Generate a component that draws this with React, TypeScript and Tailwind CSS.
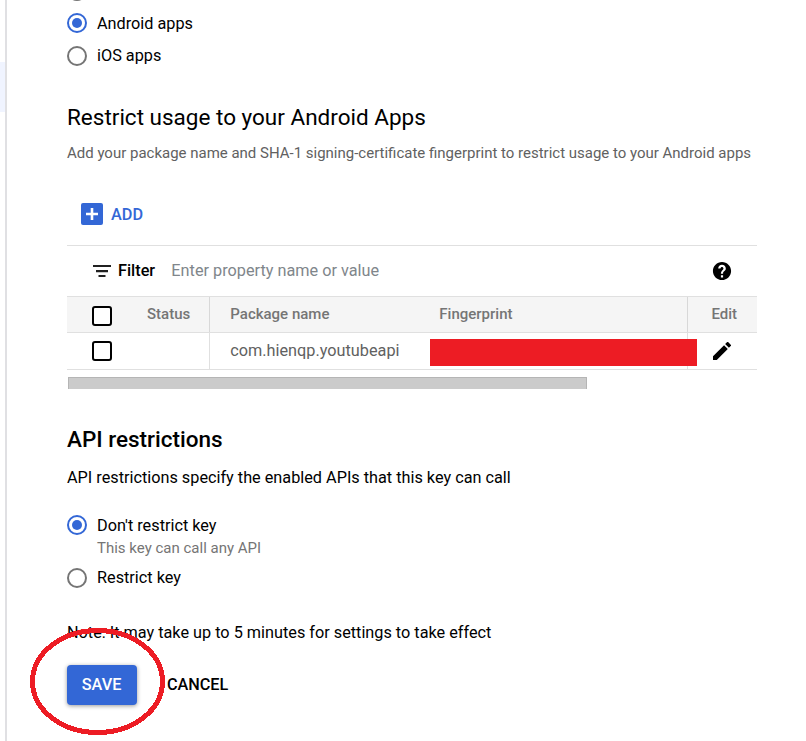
import type { ReactNode } from "react";

function Radio({ checked = false }: { checked?: boolean }) {
  return (
    <span
      className={`flex size-5 shrink-0 items-center justify-center rounded-full border-2 ${
        checked ? "border-[#3367d6]" : "border-[#757575]"
      }`}
    >
      {checked && <span className="size-2.5 rounded-full bg-[#3367d6]" />}
    </span>
  );
}

function RadioRow({ checked, children }: { checked?: boolean; children?: ReactNode }) {
  return (
    <label className="flex h-5 items-center gap-2.5">
      <Radio checked={checked} />
      <span className={checked ? "pt-0.5" : ""}>{children}</span>
    </label>
  );
}

function Checkbox() {
  return <span className="block size-5 shrink-0 rounded-[3px] border-2 border-black bg-white" />;
}

export default function App() {
  return (
    <div className="relative flex h-[741px] w-[806px] overflow-hidden bg-white font-['Roboto',sans-serif] text-[16.25px] leading-5 whitespace-nowrap text-black">
      <aside className="w-[7px] shrink-0 border-r-2 border-[#e0e0e3] pt-[62px]">
        <div className="h-[50px] bg-[#f0f4ff]" />
      </aside>

      <main className="w-[750px] pl-[60px]">
        <div className="-mt-[19px] flex flex-col">
          <RadioRow />
          <div className="h-3" />
          <RadioRow checked>Android apps</RadioRow>
          <div className="h-[13px]" />
          <RadioRow>iOS apps</RadioRow>
        </div>

        <h2 className="mt-9 text-[22.5px] leading-[30px]">Restrict usage to your Android Apps</h2>
        <p className="mt-[11px] text-[14.99px] text-[#616161]">
          Add your package name and SHA-1 signing-certificate fingerprint to restrict usage to your Android apps
        </p>

        <button className="mt-10 ml-[14px] flex h-[22px] items-center gap-2 font-medium text-[#3367d6]">
          <svg width="22" height="22" viewBox="0 0 22 22">
            <rect width="22" height="22" rx="2" fill="#3367d6" />
            <path d="M11 5v12M5 11h12" stroke="white" strokeWidth="2.6" />
          </svg>
          <span className="pt-0.5">ADD</span>
        </button>

        <section className="mt-5 w-[690px] border-t border-[#e0e0e0]">
          <div className="flex h-[50px] items-center">
            <svg className="ml-[26px]" width="18" height="12" viewBox="0 0 18 12" fill="#212121">
              <path d="M0 0h18v2H0zM3 5h12v2.2H3zM5.5 10h7v2h-7z" />
            </svg>
            <span className="ml-[7px] font-medium">Filter</span>
            <span className="ml-[16.25px] text-[#80868b]">Enter property name or value</span>
            <svg className="mr-[25px] ml-auto" width="20" height="20" viewBox="1 1 22 22">
              <path d="M12 2C6.48 2 2 6.48 2 12s4.48 10 10 10 10-4.48 10-10S17.52 2 12 2zm1.2 17.2h-2.4v-2.4h2.4v2.4zm2.07-7.75-.9.92C13.45 12.9 13.2 13.5 13.2 15h-2.4v-.5c0-1.1.45-2.1 1.17-2.83l1.24-1.26c.27-.26.39-.76.39-1.21 0-.9-.8-1.6-1.6-1.6s-1.7.7-1.7 1.6H7.8c0-2.41 1.89-4.2 4.2-4.2s4.2 1.79 4.2 4.2c0 .88-.36 1.68-.93 2.25z" />
            </svg>
          </div>

          <div className="flex h-[37px] border-y border-[#e0e0e0] bg-[#f5f5f5] text-[15px] font-medium text-[#757575]">
            <div className="flex w-[143px] border-r border-[#d8d8d8] pl-[25px]">
              <div className="pt-[9px]"><Checkbox /></div>
              <span className="ml-[35px] pt-[7px]">Status</span>
            </div>
            <span className="w-[209px] pt-[7px] pl-[20.3px]">Package name</span>
            <span className="w-[269px] border-r border-[#d8d8d8] pt-[7px] pl-[20.3px]">Fingerprint</span>
            <span className="pt-[7px] pl-[23.5px]">Edit</span>
          </div>

          <div className="flex h-[37px] border-b border-[#e0e0e0] text-[#616161]">
            <div className="flex w-[143px] items-center border-r border-[#e0e0e0] pl-[25px]">
              <Checkbox />
            </div>
            <span className="w-[209px] pt-2 pl-[20.3px]">com.hienqp.youtubeapi</span>
            <div className="relative w-[269px] border-r border-[#e0e0e0]">
              <div className="absolute top-[6px] left-[11px] h-[27px] w-[267px] bg-[#ed1c24]" />
            </div>
            <svg className="mt-[9px] ml-[25px]" width="18" height="18" viewBox="3 3 18 18" fill="black">
              <path d="M3 17.25V21h3.75L17.81 9.94l-3.75-3.75L3 17.25zM20.71 7.04a1 1 0 0 0 0-1.41l-2.34-2.34a1 1 0 0 0-1.41 0l-1.83 1.83 3.75 3.75 1.83-1.83z" />
            </svg>
          </div>
          <div className="mt-[7px] ml-px h-3 w-[519px] border border-b-0 border-[#b5b5b5] bg-[#cbcbcb]" />
        </section>

        <h2 className="mt-[35px] text-[22.5px] leading-[30px] font-medium">API restrictions</h2>
        <p className="mt-[14px]">API restrictions specify the enabled APIs that this key can call</p>

        <div className="mt-[27px]">
          <RadioRow checked>Don't restrict key</RadioRow>
          <p className="mt-[3px] ml-[30px] text-[15px] text-[#757575]">This key can call any API</p>
          <div className="mt-[10px]">
            <RadioRow>Restrict key</RadioRow>
          </div>
        </div>

        <p className="mt-[35px]">Note: It may take up to 5 minutes for settings to take effect</p>

        <div className="mt-[22px] flex font-medium">
          <button className="h-10 w-[70px] rounded bg-[#3367d6] pr-px text-white shadow-[0_1px_4px_rgba(0,0,0,0.4)]">SAVE</button>
          <button className="ml-[30px] h-10 tracking-[-0.05px]">CANCEL</button>
        </div>
      </main>

      <svg className="absolute top-[627px] left-[29px]" width="137" height="109" viewBox="0 0 137 109" shapeRendering="crispEdges">
        <ellipse cx="68.5" cy="54.5" rx="65" ry="51" fill="none" stroke="#ed1c24" strokeWidth="5" />
      </svg>
    </div>
  );
}
